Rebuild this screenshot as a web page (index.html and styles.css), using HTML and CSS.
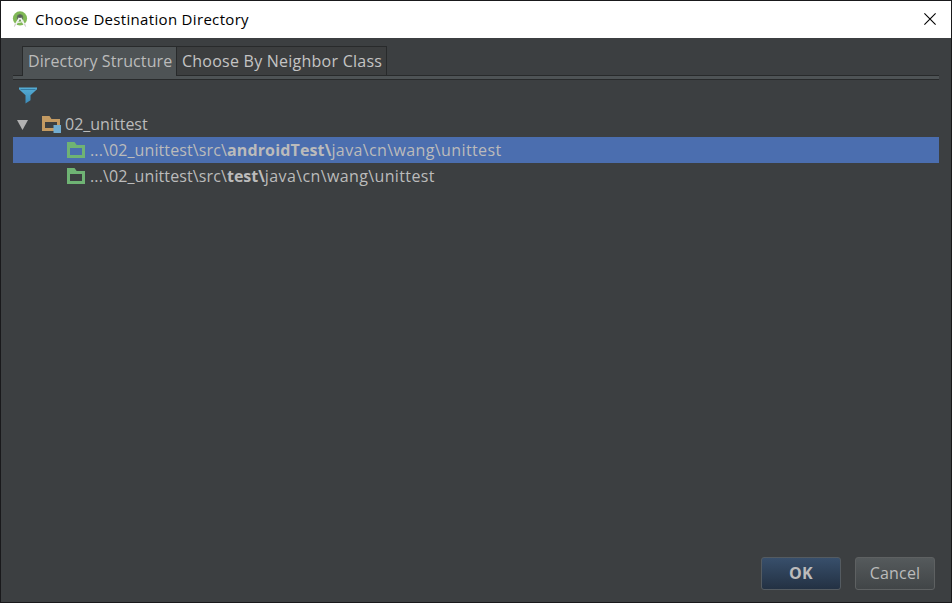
FILE: index.html
```html
<!DOCTYPE html>
<html lang="en">
<head>
<meta charset="utf-8">
<title>Choose Destination Directory</title>
<link rel="stylesheet" href="styles.css">
</head>
<body>
<div class="dialog">
  <header class="titlebar">
    <svg class="app-icon" width="16" height="16" viewBox="0 0 16 16">
      <circle cx="8" cy="7.4" r="7.1" fill="#80b856"/>
      <circle cx="8" cy="6.5" r="3.2" fill="#5f7757"/>
      <path d="M7.8 6.5 3.2 14.2M8.2 6.5l4.6 7.7" stroke="#f4f4f4" stroke-width="1.8" fill="none"/>
      <path d="M4.5 11q3.5 1.2 7-1.2" stroke="#e8eee3" stroke-width="1.1" fill="none"/>
      <circle cx="8" cy="5.3" r="1.7" fill="#59605b"/>
      <path d="m3.4 13-1 2.6M12.6 13l1 2.6" stroke="#b5b5b5" stroke-width=".8"/>
    </svg>
    <h1 class="title">Choose Destination Directory</h1>
    <svg class="close" width="12" height="12" viewBox="0 0 12 12"><path d="m.4.4 11.2 11.2M11.6.4.4 11.6" stroke="#000" stroke-width="1.1"/></svg>
  </header>
  <main class="content">
    <nav class="tabs">
      <div class="tab active"><span class="tab-structure">Directory Structure</span></div>
      <div class="tab"><span class="tab-neighbor">Choose By Neighbor Class</span></div>
    </nav>
    <div class="tab-strip"></div>
    <div class="toolbar">
      <svg width="18" height="17" viewBox="0 0 18 17">
        <defs><linearGradient id="funnel" x2="0" y2="1"><stop stop-color="#55add5"/><stop offset="1" stop-color="#3c8bb8"/></linearGradient></defs>
        <path d="M0 .5h18v1.7l-6.5 6v5L6.5 16.5V8.2L0 2.2z" fill="url(#funnel)"/>
        <path d="M1.5 2.5h15" stroke="#347da5"/>
      </svg>
    </div>
    <div class="tree">
      <div class="row root">
        <svg class="arrow" width="11" height="10" viewBox="0 0 11 10"><path d="M0 0h11L5.5 10z" fill="#b2b2b2"/></svg>
        <svg class="module" width="20" height="17" viewBox="0 0 20 17">
          <path fill="#c39a62" fill-rule="evenodd" d="M0 0h7.5l2 3H18v12H0zM3 6v6h12V6z"/>
          <path fill="#72acd0" d="M11.5 9H19v8h-7.500z"/>
        </svg>
        <span class="root-name">02_unittest</span>
      </div>
      <div class="row child selected">
        <svg class="folder" width="18" height="16" viewBox="0 0 18 16"><path fill="#6fb374" fill-rule="evenodd" d="M0 0h7.5l2.200 3H18v13H0zM3 6v7h12V6z"/></svg>
        <span class="seg-prefix">...\02_unittest\src\</span><b class="seg-android">androidTest\</b><span class="seg-suffix">java\cn\wang\unittest</span>
      </div>
      <div class="row child">
        <svg class="folder" width="18" height="16" viewBox="0 0 18 16"><path fill="#6fb374" fill-rule="evenodd" d="M0 0h7.5l2.200 3H18v13H0zM3 6v7h12V6z"/></svg>
        <span class="seg-prefix">...\02_unittest\src\</span><b class="seg-test">test\</b><span class="seg-suffix">java\cn\wang\unittest</span>
      </div>
    </div>
  </main>
  <footer class="actions">
    <button class="button primary">OK</button>
    <button class="button">Cancel</button>
  </footer>
</div>
</body>
</html>
```
FILE: styles.css
```css
* { box-sizing: border-box; }
body { margin: 0; }
svg { display: block; flex: none; }
.dialog {
  width: 952px;
  height: 603px;
  display: flex;
  flex-direction: column;
  background: #3c3f41;
  border: 1px solid #19191b;
  color: #bbb;
  font: 16px/26px "Open Sans", "Noto Sans", sans-serif;
  white-space: nowrap;
}
.titlebar {
  height: 37px;
  flex: none;
  display: flex;
  align-items: center;
  padding: 0 15px 1px 11px;
  background: #fff;
  color: #000;
}
.title {
  margin: 0 auto 0 7px;
  font-size: 15px;
  font-weight: 400;
  letter-spacing: .32px;
}
.content { flex: 1; padding: 8px 12px 0; }
.tabs { display: flex; padding-left: 9px; }
.tab {
  height: 29px;
  padding: 1px 4px 0 5px;
  border: 1px solid #282a2b;
  border-bottom: 0;
  border-left: 0;
  background: #3c3e3f;
}
.tab.active {
  width: 155px;
  height: 30px;
  margin-bottom: -1px;
  border-left: 1px solid #282a2b;
  background: #4e5355;
  position: relative;
}
.tab:last-child { width: 210px; color: #c4c4c4; }
.tab-structure { letter-spacing: .1px; }
.tab-neighbor { letter-spacing: .24px; }
.tab-strip {
  height: 5px;
  background: #4e5355;
  border-top: 1px solid #282a2b;
  border-bottom: 1px solid #282a2b;
}
.toolbar { height: 31px; padding: 7px 0 0 6px; }
.row { height: 26px; display: flex; align-items: center; }
.arrow { margin: 1px 0 0 4px; }
.module { margin: 0 3px 0 14px; }
.child { padding-left: 54px; }
.folder { margin-right: 5px; }
.seg-prefix { letter-spacing: .11px; }
.seg-android { letter-spacing: .15px; }
.seg-suffix { letter-spacing: .38px; }
.selected { background: #4b6eaf; }
.actions {
  display: flex;
  justify-content: flex-end;
  gap: 14px;
  padding: 0 16px 12px 0;
}
.button {
  width: 80px;
  height: 33px;
  padding: 0 0 2px;
  border: 1px solid #5e6162;
  border-radius: 3px;
  background: linear-gradient(#555a5c, #414547);
  color: #bbb;
  font: inherit;
  letter-spacing: .2px;
}
.primary {
  background: linear-gradient(#384f6b, #233143);
  border-color: #545b61;
  font-weight: 700;
}
```
